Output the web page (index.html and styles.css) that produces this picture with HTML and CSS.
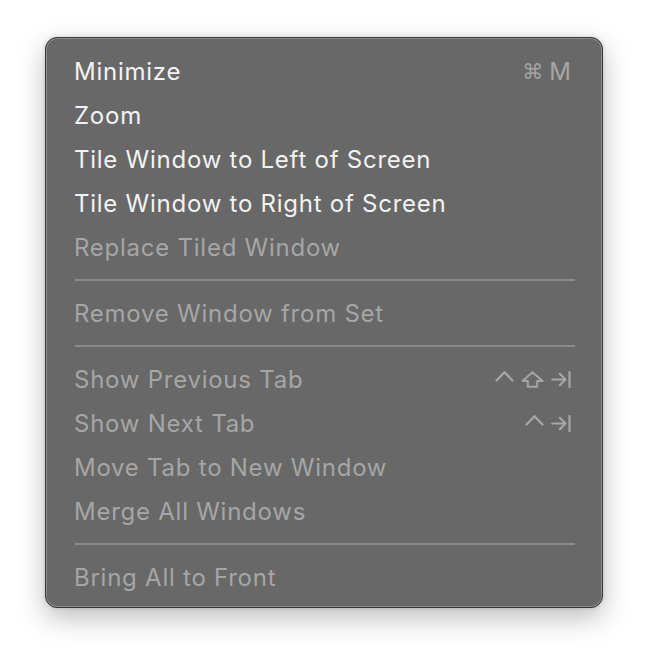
FILE: index.html
```html
<!DOCTYPE html>
<html>
<head>
<meta charset="utf-8">
<link rel="stylesheet" href="styles.css">
</head>
<body>
<div class="menu">
  <div class="item on"><span>Minimize</span><span class="key"><span class="cmd">⌘</span><span>M</span></span></div>
  <div class="item on"><span>Zoom</span></div>
  <div class="item on"><span>Tile Window to Left of Screen</span></div>
  <div class="item on"><span>Tile Window to Right of Screen</span></div>
  <div class="item"><span>Replace Tiled Window</span></div>
  <div class="sep"></div>
  <div class="item"><span>Remove Window from Set</span></div>
  <div class="sep"></div>
  <div class="item"><span>Show Previous Tab</span>
    <span class="key icons">
      <svg class="ctl" width="19" height="12" viewBox="0 0 19 12"><path d="M1.5 10.5 L9.5 2.2 L17.5 10.5" fill="none" stroke="currentColor" stroke-width="2.3" stroke-linecap="round" stroke-linejoin="round"/></svg>
      <svg class="shift" width="23" height="17" viewBox="0 0 23 17"><path d="M11.5 1.3 L21.5 10 L16.2 10 L16.2 15.8 L6.8 15.8 L6.8 10 L1.5 10 Z" fill="none" stroke="currentColor" stroke-width="2" stroke-linejoin="round"/></svg>
      <svg class="tab" width="20" height="17" viewBox="0 0 20 17"><path d="M1.2 8.5 H14.5 M8.8 2.8 L14.5 8.5 L8.8 14.2 M18.5 1 V16" fill="none" stroke="currentColor" stroke-width="2.2" stroke-linecap="round" stroke-linejoin="round"/></svg>
    </span>
  </div>
  <div class="item"><span>Show Next Tab</span>
    <span class="key icons">
      <svg class="ctl" width="19" height="12" viewBox="0 0 19 12"><path d="M1.5 10.5 L9.5 2.2 L17.5 10.5" fill="none" stroke="currentColor" stroke-width="2.3" stroke-linecap="round" stroke-linejoin="round"/></svg>
      <svg class="tab" width="20" height="17" viewBox="0 0 20 17"><path d="M1.2 8.5 H14.5 M8.8 2.8 L14.5 8.5 L8.8 14.2 M18.5 1 V16" fill="none" stroke="currentColor" stroke-width="2.2" stroke-linecap="round" stroke-linejoin="round"/></svg>
    </span>
  </div>
  <div class="item"><span>Move Tab to New Window</span></div>
  <div class="item"><span>Merge All Windows</span></div>
  <div class="sep"></div>
  <div class="item"><span>Bring All to Front</span></div>
</div>
</body>
</html>
```

FILE: styles.css
```css
html, body {
  margin: 0;
  padding: 0;
  background: #ffffff;
}
body {
  padding: 37px 0 0 45px;
  min-height: 662px;
  box-sizing: border-box;
  font-family: Inter, "Noto Sans", sans-serif;
}
.menu {
  box-sizing: border-box;
  width: 558px;
  height: 571px;
  background: #686868;
  border: 1px solid #3a3a3a;
  border-radius: 12px;
  box-shadow: inset 0 0 0 1px #8a8a8a, 0 10px 28px rgba(0,0,0,0.26), 0 0 4px rgba(0,0,0,0.14);
  padding: 11px 31px 9px 28px;
  display: flex;
  flex-direction: column;
}
.item {
  height: 44px;
  flex: none;
  display: flex;
  align-items: center;
  justify-content: space-between;
  font-size: 24px;
  color: #a6a6a6;
  letter-spacing: 0.75px;
  padding-top: 1px;
  box-sizing: border-box;
}
.item.on {
  color: #f2f2f2;
}
.key {
  color: #a6a6a6;
  display: flex;
  align-items: center;
  gap: 6px;
  letter-spacing: 0;
}
.cmd {
  font-family: "DejaVu Sans", sans-serif;
  font-size: 21px;
}
.icons {
  gap: 7px;
  margin-top: 0;
}
.icons .ctl {
  margin-top: -7px;
}
.sep {
  flex: none;
  height: 2px;
  background: #8a8a8a;
  margin: 10px 0 10px 1px;
  width: 500px;
}
```
